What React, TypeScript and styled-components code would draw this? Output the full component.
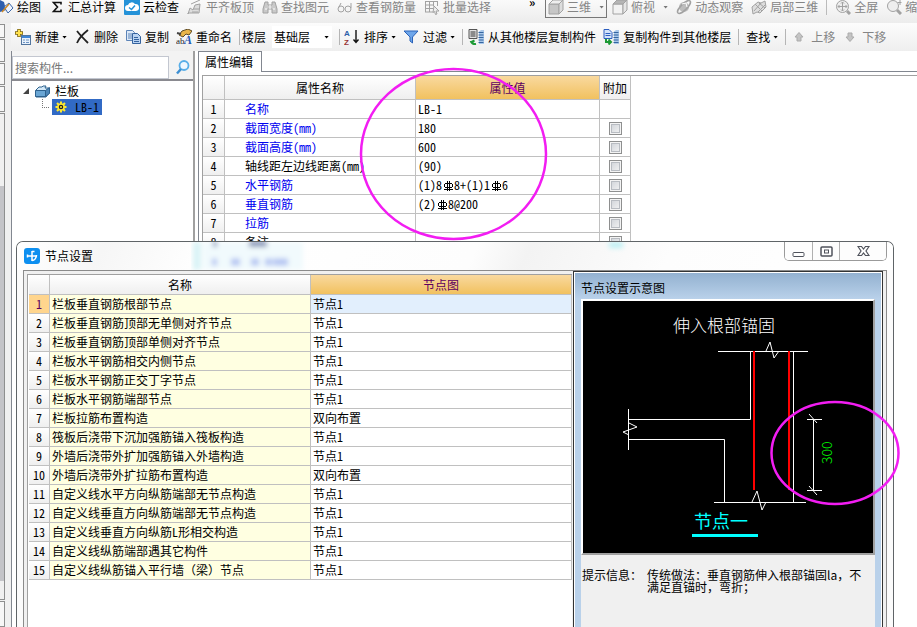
import React from 'react';
import styled, { createGlobalStyle, css } from 'styled-components';

const Global = createGlobalStyle`
  *, *::before, *::after { box-sizing: border-box; }
  html, body { margin: 0; padding: 0; height: 100%; overflow: hidden; background: #fff; }
  body { font: 12px/16px "Noto Sans CJK SC", "Noto Sans", sans-serif; color: #000; }
  button, input, select { font: inherit; color: inherit; margin: 0; }
  h1, h2, p { margin: 0; font: inherit; }
`;

const ink = '#a2a2a2';
const pink = '#f21df2';

/* ---------- shell ---------- */

const Page = styled.div`
  position: relative;
  display: flex;
  flex-direction: column;
  height: 100vh;
  overflow: hidden;
`;

const ViewBar = styled.header`
  display: flex;
  align-items: flex-start;
  height: 23px;
  flex: none;
  overflow: hidden;
  white-space: nowrap;
  line-height: 14px;
  background: linear-gradient(#fafafa, #ececec);
`;

const ToolGroup = styled.div<{ $push?: boolean }>`
  display: flex;
  align-items: center;
  gap: 8px;
  height: 14px;
  flex: none;
  margin-left: ${p => (p.$push ? '5px' : '0')};
`;

const Tool = styled.button<{ $off?: boolean; $tight?: boolean }>`
  display: flex;
  align-items: center;
  gap: ${p => (p.$tight ? '3px' : '4px')};
  flex: none;
  padding: 0;
  border: 0;
  background: none;
  white-space: nowrap;
  color: ${p => (p.$off ? '#858585' : '#000')};
  svg { flex: none; }
`;

const ViewSelect = styled(Tool)`
  width: 62px;
  height: 22px;
  padding: 0 2px;
  border: 1px solid #777;
`;

const More = styled.span`
  flex: none;
  width: 16px;
  margin-left: 38px;
  line-height: 4px;
  font-weight: 700;
`;

const Caret = styled.i<{ $off?: boolean; $wide?: boolean }>`
  width: 5px;
  height: 3px;
  margin-left: ${p => (p.$wide ? '5px' : '-1px')};
  background: ${p => (p.$off ? '#777' : '#000')};
  clip-path: polygon(0 0, 100% 0, 50% 100%);
`;

const Divider = styled.i`
  width: 1px;
  height: 16px;
  background: #bbb;
`;

const Workspace = styled.div`
  display: flex;
  flex: 1;
  min-height: 0;
`;

const DockStrip = styled.div`
  display: flex;
  flex-direction: column;
  gap: 1px;
  flex: none;
  width: 11px;
  padding-top: 1px;
  background: #f0f0f0;
`;

const DockTab = styled.div<{ $h?: number; $scroll?: boolean }>`
  width: 5px;
  border: 1px solid #8e8f8f;
  border-left: 0;
  background: #f7f7f7;
  ${p => (p.$h ? css`height: ${p.$h}px;` : css`flex: 1;`)}
  ${p => p.$scroll && css`
    padding: 72px 0 18px;
    background: #c4c4c8 content-box;
    background-clip: content-box;
  `}
`;

const Main = styled.div`
  display: flex;
  flex-direction: column;
  flex: 1;
  min-width: 0;
`;

const ActionBar = styled.nav`
  display: flex;
  align-items: center;
  gap: 7px;
  flex: none;
  height: 28px;
  padding: 0 4px;
  overflow: hidden;
  white-space: nowrap;
  background: linear-gradient(#fcfcfc, #eeeeee);
`;

const BarGroup = styled.div<{ $pad: number }>`
  display: flex;
  align-items: center;
  gap: 7px;
  flex: none;
  height: 20px;
  padding-left: ${p => p.$pad}px;
  position: relative;
  &::before {
    content: "";
    position: absolute;
    left: 0;
    top: 2px;
    bottom: 2px;
    width: 1px;
    background: #b5b5b5;
  }
`;

const FloorLabel = styled.label`
  display: flex;
  align-items: center;
  gap: 6px;
`;

const FloorBox = styled.span`
  display: flex;
  align-items: center;
  width: 60px;
  height: 22px;
  padding-right: 3px;
  background: #fff;
`;

const FloorSelect = styled.select`
  flex: 1;
  min-width: 0;
  appearance: none;
  padding: 0 0 0 2px;
  border: 0;
  background: transparent;
`;

const Panels = styled.div`
  display: flex;
  flex: 1;
  min-height: 0;
`;

/* ---------- component tree ---------- */

const Side = styled.aside`
  display: flex;
  flex-direction: column;
  flex: none;
  width: 184px;
  border-left: 1px solid #828790;
  border-right: 2px solid #a0a0a0;
  background: #fff;
`;

const SearchRow = styled.div`
  display: flex;
  align-items: center;
  gap: 6px;
  height: 30px;
  padding-top: 4px;
  background: #f3f3f3;
  border-bottom: 2px solid #8a8a90;
`;

const SearchInput = styled.input`
  width: 157px;
  height: 23px;
  padding: 0 2px;
  border: 1px solid #c3c7d0;
  border-radius: 0;
  background: #fff;
  &::placeholder { color: #777; opacity: 1; }
`;

const IconButton = styled.button`
  display: flex;
  padding: 0;
  border: 0;
  background: none;
`;

const Tree = styled.ul`
  list-style: none;
  margin: 0;
  padding: 2px 0 0 10px;
`;

const TreeRow = styled.li<{ $child?: boolean }>`
  display: flex;
  align-items: center;
  gap: ${p => (p.$child ? '2px' : '5px')};
  height: 16px;
  padding-left: ${p => (p.$child ? '20px' : '0')};
`;

const Picked = styled.span`
  display: flex;
  align-items: center;
  gap: 6px;
  height: 16px;
  padding: 0 3px;
  background: #316ac5;
  font-feature-settings: "hwid" 1;
`;

/* ---------- tables ---------- */

const Editor = styled.section`
  display: flex;
  flex-direction: column;
  flex: 1;
  min-width: 0;
  margin-left: 3px;
  border-left: 1px solid #828790;
`;

const TabRow = styled.div`
  display: flex;
  height: 21px;
  flex: none;
  &::after {
    content: "";
    flex: 1;
    border-bottom: 1px solid #828790;
  }
`;

const Tab = styled.button`
  width: 63px;
  padding: 0 0 0 6px;
  border: 1px solid #828790;
  border-width: 1px 1px 0 0;
  background: #fff;
  text-align: left;
`;

const GridFrame = styled.div`
  flex: 1;
  margin: 3px 0 0 3px;
  border: 1px solid #a0a0a0;
  border-width: 1px 0 0 1px;
`;

const Table = styled.table<{ $full?: boolean }>`
  width: ${p => (p.$full ? '100%' : '428px')};
  table-layout: fixed;
  border-collapse: separate;
  border-spacing: 0;
  font-feature-settings: "hwid" 1;
`;

const Head = styled.th<{ $h: number; $hot?: boolean }>`
  height: ${p => p.$h}px;
  padding: 0;
  font-weight: 400;
  border-right: 1px solid #c0c0c0;
  border-bottom: 1px solid #c0c0c0;
  color: ${p => (p.$hot ? '#5c0060' : '#000')};
  background: ${p => (p.$hot ? 'linear-gradient(#f9d99f, #f1c15f)' : 'linear-gradient(#ffffff, #efefef)')};
`;

const RowNo = styled.th<{ $hot?: boolean }>`
  height: 19px;
  padding: 0;
  font-weight: 400;
  line-height: 16px;
  border-right: 1px solid #c0c0c0;
  border-bottom: 1px solid #c0c0c0;
  color: ${p => (p.$hot ? '#5c0060' : '#000')};
  background: ${p => (p.$hot ? '#ffd58d' : 'linear-gradient(#ffffff, #efefef)')};
`;

const Cell = styled.td<{ $tone?: string; $indent?: boolean; $blue?: boolean; $mid?: boolean; $fullWidth?: boolean }>`
  height: 19px;
  padding: 0 0 0 ${p => (p.$indent ? '20px' : '2px')};
  line-height: 16px;
  white-space: nowrap;
  overflow: hidden;
  border-right: 1px solid #c0c0c0;
  border-bottom: 1px solid #c0c0c0;
  color: ${p => (p.$blue ? '#0000f0' : '#000')};
  background: ${p => p.$tone || '#fff'};
  ${p => p.$fullWidth && css`font-feature-settings: normal;`}
  ${p => p.$mid && css`padding: 0; text-align: center;`}
`;

const Check = styled.input`
  appearance: none;
  display: block;
  width: 13px;
  height: 13px;
  margin: 0 auto;
  border: 1px solid #8e8f8f;
  box-shadow: inset 0 0 0 1px #f4f4f4, inset 0 0 0 2px #b8bcc2;
  background: linear-gradient(135deg, #ccd0d6, #f6f6f6);
`;

const Rebar = styled.svg`
  display: inline-block;
  vertical-align: -2px;
`;

/* ---------- dialog ---------- */

const Dialog = styled.section`
  position: absolute;
  top: 241px;
  left: 16px;
  right: 23px;
  bottom: 0;
  display: flex;
  flex-direction: column;
  border: 1px solid #5f6467;
  border-bottom: 0;
  border-radius: 7px 7px 0 0;
  background: #fbfbfb;
  overflow: hidden;
`;

const TitleBar = styled.header`
  position: relative;
  display: flex;
  align-items: center;
  gap: 5px;
  flex: none;
  height: 28px;
  padding: 0 6px 0 7px;
  background: linear-gradient(115deg, #ffffff 0, #f6f6f6 10%, #ffffff 22%, #fdfdfd 52%, #f3f3f3 58%, #fdfdfd 74%, #ffffff 100%);
`;

const Ghost = styled.svg`
  position: absolute;
  left: 174px;
  top: 0;
`;

const Title = styled.h1`
  flex: 1;
  position: relative;
`;

const WinButtons = styled.div`
  display: flex;
  align-self: flex-start;
  height: 19px;
  border: 1px solid #9a9a9a;
  border-top: 0;
  border-radius: 0 0 5px 5px;
  overflow: hidden;
`;

const WinButton = styled.button<{ $w: number }>`
  display: flex;
  align-items: center;
  justify-content: center;
  width: ${p => p.$w}px;
  padding: 0;
  border: 0;
  background: #fdfdfd;
  & + & { border-left: 1px solid #b0b0b0; }
`;

const DialogBody = styled.div`
  display: flex;
  flex: 1;
  min-height: 0;
  margin: 0 6px;
  border: 1px solid #8b8b8b;
  border-bottom: 0;
  background: #f0f0f0;
`;

const NodeGrid = styled.div`
  flex: 1;
  min-width: 0;
  margin: 3px 1px 0 3px;
  border: 1px solid #a0a0a0;
  border-width: 1px 0 0 1px;
  padding-left: 1px;
  background: #fff;
`;

const Preview = styled.aside`
  display: flex;
  flex-direction: column;
  flex: none;
  width: 310px;
  margin-right: 3px;
  border: 1px solid #333;
  border-bottom: 0;
  padding: 1px 1px 0;
  background: #fff;
`;

const PreviewInner = styled.div`
  display: flex;
  flex-direction: column;
  flex: 1;
  padding: 0 6px;
  background: linear-gradient(#93b1d0 0, #b9d1ea 26px);
`;

const PreviewTitle = styled.h2`
  height: 26px;
  line-height: 30px;
`;

const Canvas = styled.svg`
  display: block;
  flex: none;
  width: 100%;
  height: 256px;
  border: 2px solid;
  border-color: #fff #a0a0a0 #a0a0a0 #fff;
  background: #000;
`;

const Hint = styled.dl`
  display: flex;
  gap: 5px;
  flex: 1;
  margin: 0;
  padding: 14px 10px 0 1px;
  background: #f0f0f0;
  line-height: 12px;
  dt { flex: none; width: 60px; }
  dd { margin: 0; }
`;

const Marks = styled.svg`
  position: absolute;
  top: 0;
  left: 0;
  width: 100%;
  height: 100%;
  pointer-events: none;
`;

/* ---------- icons ---------- */

type IconName =
  | 'draw' | 'sum' | 'cloud' | 'align' | 'find' | 'glasses' | 'batch' | 'cube' | 'cubeTop' | 'orbit' | 'local' | 'full' | 'zoom'
  | 'new' | 'del' | 'copy' | 'rename' | 'sort' | 'filter' | 'from' | 'to' | 'up' | 'down'
  | 'search' | 'folder' | 'gear';

const stack = (
  <>
    <path d="M11 2.500l2-1.500h3v14h-5z" fill="#a9c8ea" />
    <path d="M10.500 3.500h5M10.500 6h5M10.500 8.500h5M10.500 11h5M10.500 13.500h5" stroke="#35659f" strokeWidth="1.200" />
  </>
);

const shapes: Record<IconName, React.ReactNode> = {
  draw: <><path d="M2 1l4 2 2 8-6 2z" fill="#2f5fae" /><path d="M6 8l5-4 4 5-5 5z" fill="#eef4ff" stroke="#3c68a8" /><path d="M4 13l7-8" stroke="#d08a28" strokeWidth="1.500" /></>,
  sum: <path d="M12 5.500V3.500H4.500L8.500 8l-4 4.500H12v-2" fill="none" stroke="#111" strokeWidth="1.600" />,
  cloud: <><rect width="16" height="16" rx="1" fill="#2492d8" /><path d="M4 12a3 3 0 0 1 0-6 4 4 0 0 1 7-1 3.500 3.500 0 0 1 1 7z" fill="#fff" /><path d="M5 8.500l2.500 2L11 6.500" fill="none" stroke="#2492d8" strokeWidth="1.500" /></>,
  align: <><path d="M1 15l2-6 3 2 2-5 5-1-1 9H1z" fill="#ddd" stroke={ink} /><path d="M4 5l9-4M5 13h6M7 10h5" stroke={ink} /></>,
  find: <><path d="M3 3h3v3h4V3h3l2 7v4h-5v-4H6v4H1v-4z" fill="#c9c9c9" stroke={ink} /><path d="M8 6v4M3 10h2M11 10h2" stroke="#fff" /></>,
  glasses: <><circle cx="4" cy="10" r="3" fill="none" stroke={ink} /><circle cx="11" cy="10" r="3" fill="none" stroke={ink} /><path d="M1.500 9l2.500-5M14 9V4" fill="none" stroke={ink} /></>,
  batch: <><path d="M1 2.500h13M1 6h9M1 9.500h8M1 13h8M1.500 2v11M5.500 2v11M9.500 2v5M13.500 2v5" stroke={ink} fill="none" /><path d="M10 7l5 5h-3l1 3-1.500.5-1-3-1.500 1z" fill="#eee" stroke={ink} /></>,
  cube: <><path d="M1 5h10v10H1z" fill="#c6c6c6" stroke={ink} /><path d="M1 5l4-4h10l-4 4z" fill="#eee" stroke={ink} /><path d="M11 5l4-4v10l-4 4z" fill="#ddd" stroke={ink} /></>,
  cubeTop: <><path d="M1 5h10v10H1z" fill="#f2f2f2" stroke={ink} /><path d="M1 5l4-4h10l-4 4z" fill="#b5b5b5" stroke={ink} /><path d="M11 5l4-4v10l-4 4z" fill="#e6e6e6" stroke={ink} /></>,
  orbit: <><circle cx="8" cy="8" r="5" fill="#bdbdbd" /><ellipse cx="8" cy="8" rx="8.500" ry="3" transform="rotate(-45 8 8)" fill="none" stroke={ink} strokeWidth="1.500" /><path d="M6 5l4-1 1 4" stroke="#fff" fill="none" /></>,
  local: <><path d="M1 8l6-5 3 1 4-2 1 6-6 6-3-1-4 2z" fill="#ddd" stroke={ink} /><path d="M4 5l7 7M8 4l6 5M3 12l7-8M7 13l7-7" stroke={ink} fill="none" /></>,
  full: <><circle cx="7.500" cy="7.500" r="6" fill="#eee" stroke={ink} /><path d="M7.500 3v9M3 7.500h9M6 4.500l1.500-1.500L9 4.500M6 10.500L7.500 12 9 10.500M4.500 6L3 7.500 4.500 9M10.500 6L12 7.500 10.500 9" fill="none" stroke={ink} /><path d="M12 12l3 3" stroke={ink} strokeWidth="3" /></>,
  zoom: <><circle cx="7" cy="7" r="5.500" fill="#eee" stroke={ink} /><path d="M11 11l4 4" stroke={ink} strokeWidth="3" /><path d="M14 1v5M11.500 3.500h4" stroke={ink} /></>,
  new: <><path d="M4 0v8M0 4h8" stroke="#7a6310" strokeWidth="3.500" /><path d="M4 .8v6.400M.8 4h6.400" stroke="#ffe14d" strokeWidth="2" /><rect x="6.500" y="6.500" width="9" height="9" fill="#e8f1fb" stroke="#52759e" /><path d="M7 8h8" stroke="#3e86d8" strokeWidth="2" /><path d="M8 11h2M11 11h3M8 13.500h2M11 13.500h3" stroke="#6c94c4" /></>,
  del: <path d="M3 2c3 4 6 7 11 12M14 1C9 5 5 9 3 14" fill="none" stroke="#222" strokeWidth="1.800" />,
  copy: <><path d="M1.500 1.500h6l2 2v8h-8z" fill="#dce9f8" stroke="#5c84b8" /><path d="M3 5h4M3 7h4M3 9h4" stroke="#5c84b8" /><path d="M7.500 4.500h5l3 3v7h-8z" fill="#b9d3f2" stroke="#34629e" /><path d="M9 8.500h4M9 10.500h5M9 12.500h5" stroke="#34629e" /></>,
  rename: <><path d="M3 6l3-4 6-2 4 2-3 4-3-1-3 3z" fill="#e9b54a" stroke="#5c4a26" /><path d="M1 4l4 1" stroke="#444" strokeWidth="2" /><text x="0" y="15" fontSize="9" fontFamily="Liberation Serif, serif" fill="#222">ab</text><text x="8" y="15" fontSize="12" fontWeight="700" fontStyle="italic" fontFamily="Liberation Serif, serif" fill="#2358b5">A</text></>,
  sort: <><text x="0" y="7" fontSize="8" fontWeight="700" fontFamily="Liberation Sans, sans-serif" fill="#2c5fa8">A</text><text x="0" y="16" fontSize="8" fontWeight="700" fontFamily="Liberation Sans, sans-serif" fill="#993434">Z</text><path d="M12 1v12M9.500 10.500L12 13.500l2.500-3" fill="none" stroke="#111" strokeWidth="1.400" /></>,
  filter: <path d="M1 2h14l-5.500 6v6L7 12V8z" fill="#6ea6ea" stroke="#2a62b8" />,
  from: <><path d="M1 .5h8v9H1z" fill="#e2e2e2" stroke="#555" /><path d="M2.500 3h5M2.500 5h5M2.500 7h5" stroke="#333" />{stack}<path d="M8 15c-3 .5-5-1-5-3M6.500 11.500L3.500 13l4 3" fill="none" stroke="#1d9a35" strokeWidth="2" /></>,
  to: <><path d="M1 .5h5l3 3v6H1z" fill="#d4e4fa" stroke="#2c5fc0" /><path d="M2.500 4.500h5M2.500 6.500h5" stroke="#2c5fc0" />{stack}<path d="M3 10v3h4M5.500 10.500L8 13l-2.500 2.500" fill="none" stroke="#1d9a35" strokeWidth="2" /></>,
  up: <path d="M8 3.500l4 4.500H10v4H6V8H4z" fill="#c4c4c4" stroke="#ababab" />,
  down: <path d="M8 12.500L4 8h2V4h4v4h2z" fill="#c4c4c4" stroke="#ababab" />,
  search: <><circle cx="9" cy="6.500" r="4.500" fill="#eef7ff" stroke="#58aee8" strokeWidth="1.800" /><path d="M6 10l-4 4.500" stroke="#3c8fd2" strokeWidth="2.500" /></>,
  folder: <><path d="M2 7l3-3h3l1-1h3l-1 2h4v5l-3 4H2z" fill="#d3e8f7" stroke="#2e628e" /><path d="M1.500 7.500h10v6h-10z" fill="#6aa6d4" stroke="#2e628e" /><path d="M11.500 7.500l4-3v6l-4 3z" fill="#4c86b8" stroke="#2e628e" /></>,
  gear: <><path d="M8 2.500v11M2.500 8h11M4 4l8 8M12 4l-8 8" stroke="#ffe92e" strokeWidth="2" /><circle cx="8" cy="8" r="3" fill="#222" stroke="#ffe92e" strokeWidth="1.500" /><circle cx="8" cy="8" r="1" fill="#ffe92e" /></>,
};

const Icon = ({ name, w = 16 }: { name: IconName; w?: number }) => (
  <svg width={w} height="16" viewBox={`${16 - w} 0 ${w} 16`} aria-hidden="true">{shapes[name]}</svg>
);

const RebarMark = () => (
  <Rebar width="12" height="12" viewBox="0 0 12 12" role="img" aria-label="HRB400">
    <path d="M5.500 1v10M7.500 1v10M2.500 4v3M10.500 4v3M3 3.500h7M3 7.500h7M2 9.500h9" fill="none" stroke="#000" />
  </Rebar>
);

/* ---------- data ---------- */

const viewTools: [IconName, string, boolean][] = [
  ['sum', '汇总计算', false],
  ['cloud', '云检查', false],
  ['align', '平齐板顶', true],
  ['find', '查找图元', true],
  ['glasses', '查看钢筋量', true],
  ['batch', '批量选择', true],
];

const props: { name: string; value: React.ReactNode; plain?: boolean; noCheck?: boolean }[] = [
  { name: '名称', value: 'LB-1', noCheck: true },
  { name: '截面宽度(mm)', value: '180' },
  { name: '截面高度(mm)', value: '600' },
  { name: '轴线距左边线距离(mm)', value: '(90)', plain: true },
  { name: '水平钢筋', value: <>(1)8<RebarMark />8+(1)1<RebarMark />6</> },
  { name: '垂直钢筋', value: <>(2)<RebarMark />8@200</> },
  { name: '拉筋', value: '' },
  { name: '备注', value: '', plain: true },
];

const nodes: [string, string][] = [
  ['栏板垂直钢筋根部节点', '节点1'],
  ['栏板垂直钢筋顶部无单侧对齐节点', '节点1'],
  ['栏板垂直钢筋顶部单侧对齐节点', '节点1'],
  ['栏板水平钢筋相交内侧节点', '节点1'],
  ['栏板水平钢筋正交丁字节点', '节点1'],
  ['栏板水平钢筋端部节点', '节点1'],
  ['栏板拉筋布置构造', '双向布置'],
  ['筏板后浇带下沉加强筋锚入筏板构造', '节点1'],
  ['外墙后浇带外扩加强筋锚入外墙构造', '节点1'],
  ['外墙后浇带外扩拉筋布置构造', '双向布置'],
  ['自定义线水平方向纵筋端部无节点构造', '节点1'],
  ['自定义线垂直方向纵筋端部无节点构造', '节点1'],
  ['自定义线垂直方向纵筋L形相交构造', '节点1'],
  ['自定义线纵筋端部遇其它构件', '节点1'],
  ['自定义线纵筋锚入平行墙（梁）节点', '节点1'],
];

/* ---------- sections ---------- */

const ViewToolbar = () => (
  <ViewBar>
    <ToolGroup>
      <Tool $tight><Icon name="draw" w={14} />绘图</Tool>
      {viewTools.map(([icon, text, off]) => (
        <Tool key={text} $tight $off={off}><Icon name={icon} />{text}</Tool>
      ))}
    </ToolGroup>
    <More>»</More>
    <ToolGroup>
      <ViewSelect $tight $off><Icon name="cube" />三维<Caret $off $wide /></ViewSelect>
    </ToolGroup>
    <ToolGroup $push>
      <Tool $tight $off><Icon name="cubeTop" />俯视<Caret $off $wide /></Tool>
      <Tool $tight $off><Icon name="orbit" />动态观察</Tool>
      <Tool $tight $off><Icon name="local" />局部三维</Tool>
      <Divider />
      <Tool $tight $off><Icon name="full" />全屏</Tool>
      <Tool $tight $off><Icon name="zoom" />缩放</Tool>
    </ToolGroup>
  </ViewBar>
);

const Actions = () => (
  <ActionBar>
    <Tool><Icon name="new" />新建<Caret /></Tool>
    <Tool><Icon name="del" />删除</Tool>
    <Tool><Icon name="copy" />复制</Tool>
    <Tool><Icon name="rename" />重命名</Tool>
    <BarGroup $pad={3}>
      <FloorLabel>
        楼层
        <FloorBox>
          <FloorSelect defaultValue="基础层"><option>基础层</option></FloorSelect>
          <Caret />
        </FloorBox>
      </FloorLabel>
    </BarGroup>
    <BarGroup $pad={5}>
      <Tool><Icon name="sort" />排序<Caret /></Tool>
      <Tool><Icon name="filter" />过滤<Caret /></Tool>
    </BarGroup>
    <BarGroup $pad={6}>
      <Tool><Icon name="from" />从其他楼层复制构件</Tool>
      <Tool><Icon name="to" />复制构件到其他楼层</Tool>
    </BarGroup>
    <BarGroup $pad={8}>
      <Tool>查找<Caret /></Tool>
    </BarGroup>
    <BarGroup $pad={6}>
      <Tool $off><Icon name="up" />上移</Tool>
      <Tool $off><Icon name="down" />下移</Tool>
    </BarGroup>
  </ActionBar>
);

const ComponentTree = () => (
  <Side>
    <SearchRow>
      <SearchInput type="search" aria-label="搜索构件" placeholder="搜索构件..." />
      <IconButton aria-label="搜索"><Icon name="search" /></IconButton>
    </SearchRow>
    <Tree>
      <TreeRow>
        <svg width="8" height="8" viewBox="0 0 8 8" aria-hidden="true"><path d="M7 1v6H1z" fill="#444" /></svg>
        <Icon name="folder" w={15} />
        栏板
      </TreeRow>
      <TreeRow $child>
        <svg width="8" height="16" viewBox="0 0 8 16" aria-hidden="true">
          <path d="M.5 0v8M0 8.500h8" stroke="#777" strokeDasharray="1 1" />
        </svg>
        <Picked><Icon name="gear" w={14} />LB-1</Picked>
      </TreeRow>
    </Tree>
  </Side>
);

const PropertyEditor = () => (
  <Editor>
    <TabRow><Tab>属性编辑</Tab></TabRow>
    <GridFrame>
      <Table>
        <colgroup><col width="22" /><col width="191" /><col width="184" /><col width="31" /></colgroup>
        <thead>
          <tr>
            <Head $h={24} />
            <Head $h={24}>属性名称</Head>
            <Head $h={24} $hot>属性值</Head>
            <Head $h={24}>附加</Head>
          </tr>
        </thead>
        <tbody>
          {props.map((p, i) => (
            <tr key={p.name}>
              <RowNo>{i + 1}</RowNo>
              <Cell $indent $blue={!p.plain}>{p.name}</Cell>
              <Cell>{p.value}</Cell>
              <Cell $mid>{!p.noCheck && <Check type="checkbox" aria-label={`附加 ${p.name}`} />}</Cell>
            </tr>
          ))}
        </tbody>
      </Table>
    </GridFrame>
  </Editor>
);

const NodeDrawing = () => (
  <Canvas viewBox="0 0 290 252" preserveAspectRatio="xMinYMin meet" role="img" aria-label="伸入根部锚固">
    <text x="90" y="31" fontSize="17" fontWeight="300" fill="#fff">伸入根部锚固</text>
    <g fill="none" stroke="#fff">
      <path d="M135 50.500h90M183 50l4-9 4 16 5-7" />
      <path d="M167.500 50v68.500H45.500M210.500 50v151" />
      <path d="M45.500 108v41M46 122l8 4-14 5 6 3" />
      <path d="M45.500 138.500h96v63M131 201.500h92M169 201l5-11 5 19 4-8" />
      <path d="M224 118.500h15M224 189.500h15M230.500 118v72M226 113l8 9M226 185l8 9" />
    </g>
    <path d="M171 50v139M206 50v139" stroke="#f00" strokeWidth="2" />
    <text transform="translate(249 163) rotate(-90)" fontSize="14" fontWeight="300" fill="#0f0">300</text>
    <text x="111" y="227" fontSize="18" fill="#0ff">节点一</text>
    <path d="M109 234.500h66" stroke="#0ff" strokeWidth="3" />
  </Canvas>
);

const NodeDialog = () => (
  <Dialog role="dialog" aria-label="节点设置">
    <TitleBar>
      <Ghost width="450" height="28" viewBox="0 0 450 28" aria-hidden="true">
        <defs><filter id="soft" x="-20%" y="-60%" width="140%" height="220%"><feGaussianBlur stdDeviation="2.500" /></filter></defs>
        <g filter="url(#soft)">
          <rect x="2" width="8" height="28" fill="#d9f3f6" />
          <rect x="12" y="0" width="100" height="28" fill="#f1fafd" />
          <path d="M22 2h4M58 2h18" stroke="#8594b8" strokeWidth="6" />
          <path d="M21 20h5M40 20h9M60 20h8M74 20h7M82 20h15" stroke="#b4c4f2" strokeWidth="7" />
          <rect x="418" y="0" width="14" height="6" fill="#bdf0f4" />
        </g>
      </Ghost>
      <svg width="16" height="16" viewBox="0 0 16 16" aria-hidden="true">
        <rect width="16" height="16" rx="3" fill="#0d8ff0" />
        <path d="M8 3v10M3 8h10M8 3.500h2.500M3.500 6.500v3M12.500 7c0 3-2 5.500-4.500 5.500" fill="none" stroke="#fff" strokeWidth="1.500" />
      </svg>
      <Title>节点设置</Title>
      <WinButtons>
        <WinButton $w={27} aria-label="最小化">
          <svg width="13" height="13"><rect x="1" y="7.500" width="11" height="4" rx="1" fill="#fff" stroke="#50535c" /></svg>
        </WinButton>
        <WinButton $w={27} aria-label="最大化">
          <svg width="13" height="11"><rect x="1" y="1" width="11" height="9" rx="1" fill="#fff" stroke="#50535c" strokeWidth="1.500" /><rect x="4.500" y="4" width="4" height="3" fill="#fff" stroke="#50535c" /></svg>
        </WinButton>
        <WinButton $w={47} aria-label="关闭">
          <svg width="13" height="12"><path d="M1 1.500h3.500l2 2.500 2-2.500H12L9 6l3 4.500H8.500L6.500 8l-2 2.500H1L4 6z" fill="#fff" stroke="#50535c" strokeWidth="1.200" /></svg>
        </WinButton>
      </WinButtons>
    </TitleBar>
    <DialogBody>
      <NodeGrid>
        <Table $full>
          <colgroup><col width="21" /><col /><col /></colgroup>
          <thead>
            <tr><Head $h={20} /><Head $h={20}>名称</Head><Head $h={20} $hot>节点图</Head></tr>
          </thead>
          <tbody>
            {nodes.map(([name, node], i) => (
              <tr key={name}>
                <RowNo $hot={i === 0}>{i + 1}</RowNo>
                <Cell $tone="#ffffe1" $fullWidth={name.includes('（')}>{name}</Cell>
                <Cell $tone={i === 0 ? '#e2effd' : undefined}>{node}</Cell>
              </tr>
            ))}
          </tbody>
        </Table>
      </NodeGrid>
      <Preview>
        <PreviewInner>
          <PreviewTitle>节点设置示意图</PreviewTitle>
          <NodeDrawing />
          <Hint>
            <dt>提示信息：</dt>
            <dd>传统做法：垂直钢筋伸入根部锚固la，不满足直锚时，弯折；</dd>
          </Hint>
        </PreviewInner>
      </Preview>
    </DialogBody>
  </Dialog>
);

const App = () => (
  <Page>
    <Global />
    <ViewToolbar />
    <Workspace>
      <DockStrip>
        <DockTab $h={14} />
        <DockTab $h={23} />
        <DockTab $h={22} />
        <DockTab $h={26} />
        <DockTab $scroll />
        <DockTab $h={26} />
      </DockStrip>
      <Main>
        <Actions />
        <Panels>
          <ComponentTree />
          <PropertyEditor />
        </Panels>
      </Main>
    </Workspace>
    <NodeDialog />
    <Marks aria-hidden="true">
      <ellipse cx="453.500" cy="154" rx="92.500" ry="85" fill="none" stroke={pink} strokeWidth="2.500" />
      <ellipse cx="835" cy="453" rx="63.500" ry="51" fill="none" stroke={pink} strokeWidth="2.500" />
    </Marks>
  </Page>
);

export default App;
